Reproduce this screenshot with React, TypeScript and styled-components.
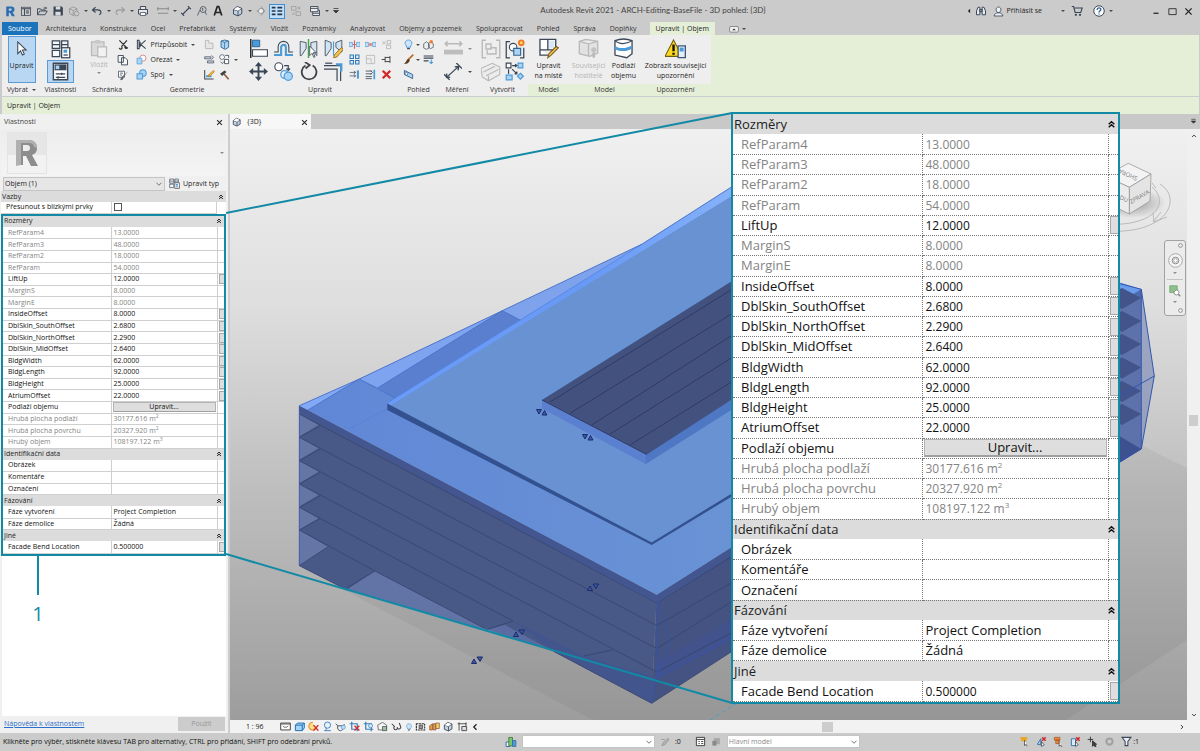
import React from "react";
import styled, { createGlobalStyle, css } from "styled-components";

const teal = "#128aa6";
const ink = "#3b4656";

const GlobalStyle = createGlobalStyle`
  * { box-sizing: border-box; }
  body { margin: 0; background: #cbcbcb; font-family: "Open Sans", "Noto Sans", sans-serif; font-size: 7px; line-height: 10px; color: #1e1e1e; }
  button, select, input { font: inherit; color: inherit; margin: 0; }
  button { border: 0; background: none; padding: 0; }
`;

/* ---------- icons ---------- */

const B = "#4d9bd6";
const L = "#a9d4f5";
const G = "#b9b9b9";

const icons: Record<string, React.ReactNode> = {
  revit: <><path d="M3 2h6.500c3 0 4.500 1.500 4.500 4 0 2-1 3.200-2.600 3.700L14.500 15H10.600L8 10.200H6.400V15H3z" fill="#2a6db0" /><path d="M6.400 4.800v2.700h2.300c1 0 1.600-.5 1.600-1.400S9.700 4.800 8.700 4.800z" fill="#cbcbcb" /></>,
  schedule: <><rect x="2" y="3" width="12" height="11" fill="none" stroke={ink} /><path d="M2 5h12M6 5v9M8 8h4M8 10.500h4" stroke={ink} strokeWidth="1.300" /></>,
  folder: <path d="M2 13V5h4l1 1.500h5V8M2 13l3-5h10l-3 5zM10 4h4M12.500 2.500L14 4l-1.500 1.500" fill="none" stroke={ink} strokeWidth="1.200" />,
  save: <><path d="M2 2h11l1.500 1.500V14H2z" fill={ink} /><path d="M5 2h6v4H5zM4.500 9h7v5h-7z" fill="#dcdcdc" /></>,
  sync: <><path d="M2 5l5-2.500L12 5v6l-5 3-5-3zM2 5l5 2.500L12 5M7 7.500V14" fill="none" stroke="#8f8f8f" /><circle cx="11.500" cy="11.500" r="3" fill="#cbcbcb" stroke="#8f8f8f" /></>,
  undo: <path d="M6 3L2 6.500 6 10M2 6.500h7c5 0 5.500 5 2 6.500" fill="none" stroke={ink} strokeWidth="1.600" />,
  redo: <path d="M10 3l4 3.500L10 10M14 6.500H7c-5 0-5.500 5-2 6.500" fill="none" stroke="#9c9c9c" strokeWidth="1.400" />,
  print: <><path d="M4.500 6V2h7v4M2 6h12v6H2z" fill="#e8e8e8" stroke={ink} strokeWidth="1.300" /><path d="M4.500 10h7v4h-7z" fill="#fff" stroke={ink} /></>,
  measure: <path d="M1 5h14M1 3v4M15 3v4M1 11h14" stroke="#8a8a8a" strokeWidth="1.600" fill="none" />,
  dimension: <path d="M3 13L13 3M1.500 10.500l4 4M10.500 1.500l4 4" stroke={ink} strokeWidth="1.500" />,
  tag: <><path d="M2 14L5 7" stroke={ink} /><circle cx="9.500" cy="6" r="4" fill="none" stroke={ink} /><path d="M9 8V4l-1 1M12 9l2 4" stroke={ink} fill="none" /></>,
  textA: <path d="M3 14L7 2h2l4 12M4.500 10h7" fill="none" stroke="#222" strokeWidth="2.200" />,
  home3d: <><path d="M2 6L7 2l6 2.500v7L8 14.500 2 12z" fill="#c6d3e3" stroke={ink} strokeWidth="1.300" /><path d="M2 6l6 2 5-3.500M8 8v6.500" fill="none" stroke={ink} strokeWidth="1.200" /><path d="M2.500 6L7 2.500l5 2L8 7.500z" fill="#fff" /></>,
  section: <><path d="M2 8h3" stroke="#888" /><circle cx="8" cy="8" r="3.500" fill="#eee" stroke="#888" /><path d="M8 2l5 6-5 6" fill="none" stroke="#888" /></>,
  thin: <path d="M1 3.500h5M1 8h5M1 12.500h5M8.500 3.500H15M8.500 8H15M8.500 12.500H15" stroke="#23374d" strokeWidth="2.200" />,
  closeHidden: <path d="M2 2h6v5H2zM8 9h6v5H8zM10 2l4 4M14 2l-4 4M3 10l3 3M6 10l-3 3" fill="none" stroke="#9a9a9a" />,
  switchWin: <path d="M2 2h10v7H2zM2 4.500h10M5 9v5h9V7h-2M5 11h9" fill="#eee" stroke={ink} strokeWidth="1.200" />,
  arrow: <path d="M4 1v12.500l3-3 2 4.500 2-1-2-4.300h4z" fill="#fff" stroke={ink} strokeWidth="1.100" />,
  typeProps: <><path d="M1 1.500h6v6H1zM8.500 1.500h5v6h-5zM1 9h6v5H1z" fill="#f6f9fc" stroke={ink} /><path d="M1 4.500h6M8.500 4.500h5" stroke={ink} /><rect x="8.500" y="7" width="6.500" height="8" fill="#fff" stroke={ink} /><rect x="10" y="8.500" width="3" height="2.500" fill={B} /><path d="M10 12.800h3.500" stroke={ink} /></>,
  props: <><path d="M2 1h12v14H2z" fill="#fff" stroke={ink} strokeWidth="1.200" /><path d="M3 2h10v5H3z" fill={ink} /><path d="M4 3h3v3H4z" fill={L} /><path d="M4 10h8M4 13h8M9 9v2M6 12v2" stroke={ink} /></>,
  paste: <><path d="M2 3h10v11H2z" fill="#dadada" stroke={G} /><path d="M5 1.500h4v3H5z" fill="#c8c8c8" /><path d="M7 7h7v8H7z" fill="#f2f2f2" stroke={G} /></>,
  cut: <path d="M2 2l11 11M13 2L5 11M2 13a2 2 0 1 0 3-2M14 12a2 2 0 1 1-3-2" fill="none" stroke="#333" strokeWidth="1.800" />,
  copy: <path d="M1.500 2h7v9h-7zM6 5h5l3 3v6.500H6z" fill="#f7f7f7" stroke={ink} strokeWidth="1.200" />,
  match: <><path d="M2 3h8v8H2z" fill="#fff" stroke={ink} /><path d="M4 5.500h4M4 8h3" stroke={ink} /><path d="M15 3l-6 7-1 4-4 1 1.500-3.500L8 9z" fill="#5a6470" /></>,
  cope: <path d="M2 2h2.500v12H2zM14 2L7 8l7 6M6 4v8" fill="none" stroke={ink} strokeWidth="1.500" />,
  cutGeo: <><circle cx="10" cy="6" r="4.500" fill="#fff" stroke="#c0605e" /><path d="M1.500 6h7v8.500h-7z" fill={L} stroke={B} /></>,
  join: <><circle cx="10" cy="6" r="4.800" fill={L} stroke={B} strokeWidth="1.500" /><path d="M1.500 7h8v7.500h-8z" fill={L} stroke={B} strokeWidth="1.500" /></>,
  notch: <path d="M2 2h5v4h6v8H2z" fill="#e6e6e6" stroke={G} strokeWidth="1.400" />,
  splitFace: <><path d="M3 3l5-1.500L14 3v9l-5 3-6-3z" fill={L} stroke="#34648f" strokeWidth="1.300" /><path d="M8 5l6-2M8 5v9M3 3l5 2" stroke="#34648f" fill="none" /></>,
  beam: <path d="M1 4h9v3H1zM5 10h9v3H5zM11 2l3 3-3 3" fill="#cfd8e2" stroke={ink} />,
  wallJoin: <><circle cx="4.500" cy="4.500" r="3.500" fill="#fff" stroke={ink} /><path d="M8 8h6v6H8zM9 2h5v4" fill="#fff" stroke={ink} strokeWidth="1.200" /><path d="M2 11l3 3 2-3" fill="none" stroke={ink} /></>,
  paint: <><path d="M1 1.500v13h13" fill="none" stroke={ink} strokeWidth="1.500" /><path d="M3 12h8v-3H3z" fill={B} /><path d="M14 2L7 8l-1 3 3-1 6-6z" fill="#f4b740" stroke="#b5791c" /></>,
  hammer: <><path d="M7 7l7 8" stroke="#8b5a3a" strokeWidth="2.400" /><path d="M1.500 7L8 2l3 2.500L4.500 10z" fill="#444" /></>,
  align: <><path d="M1.500 0v16" stroke="#222" strokeWidth="1.200" /><path d="M3 1h6v5.500H3z" fill={B} stroke="#28649b" strokeWidth=".8" /><path d="M3 9h12.500v5.500H3z" fill="#fff" stroke={ink} strokeWidth=".9" /></>,
  offset: <><path d="M0 11h3.500V6.500a4.500 4.500 0 0 1 9 0V11H16" fill="none" stroke={ink} strokeWidth=".9" /><path d="M0 13.500h6V7a2 2 0 0 1 4 0v6.500h6" fill="none" stroke={B} strokeWidth="1.800" /></>,
  mirrorAxis: <><path d="M1 2v12h1l4-6V3zM15 2v12l-5-6V3z" fill="#d7e4ef" stroke={ink} strokeWidth=".7" /><path d="M8 0v16" stroke="#3fa64a" strokeWidth="1.200" /><path d="M9 6v8l2-2 1.500 3.500 1-.5-1.500-3.500h2.500z" fill="#fff" stroke={ink} strokeWidth=".7" /></>,
  mirrorDraw: <><path d="M1 1v13h1l4-6V3zM15 1v10l-5-4V3z" fill="#cfe4f5" stroke={ink} strokeWidth=".7" /><path d="M8 2v12" stroke={B} /><path d="M15 7l-6 6-1 3 3-1 5-6z" fill="#f5c14a" stroke="#8a6420" strokeWidth=".7" /></>,
  move: <path d="M8 0l3 3.500H8.800v3.700h3.700V5L16 8l-3.500 3V8.800H8.800v3.700H11L8 16l-3-3.500h2.200V8.800H3.500V11L0 8l3.500-3v2.200h3.700V3.500H5z" fill={ink} />,
  copyMod: <><circle cx="4" cy="4" r="3.300" fill="#fff" stroke={ink} strokeWidth=".9" /><circle cx="9" cy="10.500" r="3.300" fill="#e4f1fb" stroke={B} /><circle cx="12" cy="12" r="3.500" fill={L} stroke={B} /><path d="M8.500 3H12v4M10.500 5.500L12 7l1.500-1.500" fill="none" stroke={ink} /></>,
  rotate: <path d="M11.500 3a6.200 6.200 0 1 1-6 0M5 0l4 2.600L5.500 5.500" fill="none" stroke="#3f4146" strokeWidth="1.500" />,
  trim: <><path d="M0 3h14v13M0 6h11v10" fill="none" stroke={ink} strokeWidth="1" /><path d="M10 2h4.500v6" stroke={B} strokeWidth="2" fill="none" /><path d="M1 1h6" stroke={ink} /></>,
  split: <><path d="M0 5h5v6H0zM11 5h5v6h-5z" fill="#bfe0f7" stroke={B} /><path d="M8 2v12M6 8h4" stroke="#d35a5a" strokeWidth="1.600" /></>,
  splitGap: <><path d="M0 5h5v6H0zM11 5h5v6h-5z" fill="#bfe0f7" stroke={B} /><circle cx="8" cy="8" r="2.500" fill="#e68989" /></>,
  unpin: <path d="M2 3l5 5M7 3L2 8M9 2h5v5H9zM8 9h6v5H8z" fill="none" stroke={G} strokeWidth="1.400" />,
  array: <path d="M1.500 1.500h5v5h-5zM9.500 1.500h5v5h-5zM1.500 9.500h5v5h-5zM9.500 9.500h5v5h-5z" fill="#d9ecfa" stroke="#3279b5" strokeWidth="1.500" />,
  scale: <path d="M2 2h12v12H2zM2 7h7v7" fill="#eee" stroke={G} strokeWidth="1.300" />,
  pin: <path d="M1 8h5M6 5h7M6 11h7M6 4v8M13 3v10" stroke="#444" strokeWidth="1.400" fill="none" />,
  trimOne: <><path d="M13 2v12" stroke={B} strokeWidth="3" /><path d="M1 5h8M1 10h8M7 3l3 2-3 2M7 8l3 2-3 2" fill="none" stroke={ink} /></>,
  trimMulti: <><path d="M13.500 1v14" stroke={B} strokeWidth="2.500" /><path d="M1 3h9M1 7h9M1 11h9M1 14h9M8 2l3 3-3 3" stroke={ink} strokeWidth="1.200" fill="none" /></>,
  del: <path d="M2.500 2.500l11 11M13.500 2.500l-11 11" stroke="#d42a2a" strokeWidth="3.400" />,
  bulb: <><path d="M5 10C1 6 4 1.500 8 1.500S15 6 11 10v2H5z" fill="#cfe6fa" stroke={B} strokeWidth="1.300" /><path d="M6 14h4" stroke={ink} strokeWidth="1.800" /></>,
  displace: <><path d="M1 7l4-3 4 3v6l-4 2-4-2zM8 7l3-3 4 3v5l-4 2-3-2z" fill="#eee" stroke={ink} /><circle cx="12" cy="4" r="2.600" fill="#ee7b30" /></>,
  brush: <><path d="M15 1L7 9" stroke="#b9722e" strokeWidth="2.500" /><path d="M8 7l2 2c-2 5-5 6-9 5 4-1 3-5 7-7z" fill="#5b3a22" /></>,
  lines: <><path d="M1 3h14M1 6h14M1 10h7" stroke={ink} strokeWidth="1.500" /><path d="M12 8v6M9.500 11.500L12 14l2.500-2.500" stroke={B} strokeWidth="1.500" fill="none" /></>,
  linework: <><path d="M2 2l12 6v6L2 8z" fill={L} stroke="#315f8c" strokeWidth="1.300" /><circle cx="5" cy="7" r="2" fill="#fff" stroke="#315f8c" /></>,
  rulerGray: <><path d="M1 4h14M3 2L1 4l2 2M13 2l2 2-2 2" fill="none" stroke={G} strokeWidth="1.200" /><path d="M0 9h16v4H0z" fill="#bdbdbd" /></>,
  dimBig: <path d="M2 13L13 3M0 10l5 5M11 0l5 5M13 3l-3.500.5M13 3l-.5 3.500M2 13l3.500-.5M2 13l.5-3.500" stroke={ink} strokeWidth="1.200" fill="none" />,
  groupGray: <path d="M4 1H1v14h3M12 1h3v14h-3M4 4h4v4H4zM8 7h4v5H5V9" fill="none" stroke={G} strokeWidth="1.100" />,
  group: <><path d="M4 2H1v13h3M12 15h3V7" fill="none" stroke={ink} strokeWidth="1" /><circle cx="6.500" cy="6.500" r="3" fill="#fff" stroke={ink} strokeWidth=".9" /><path d="M7 7.500h5.500V13H7z" fill={L} stroke="#34648f" strokeWidth=".9" /><circle cx="13" cy="3" r="2.700" fill="#f07c2e" /><circle cx="13" cy="3" r="1.100" fill="#ffe169" /></>,
  partsGray: <path d="M0 5l9-4 6 3v6l-9 5-5-3zM2 8l9-4.500M4 11l10-5M6 15V11" fill="#ececec" stroke={G} strokeWidth=".9" />,
  assembly: <><path d="M1 1h4v4H1z" fill="#fff" stroke={ink} /><path d="M11 1h4v4h-4zM1 11h5v4H1z" fill={L} stroke={B} /><path d="M13 9.500l2.500 2.500-2.500 2.500-2.500-2.500z" fill={L} stroke={B} /><path d="M6 3h4M3 6v4M6 6l4 4M8.500 1.800L10 3 8.500 4.200M10 8v2H8" stroke={ink} fill="none" /></>,
  editPlace: <><path d="M1.500 1h12v8h-12zM1.500 9v4H8M7.500 1v8" fill="#fff" stroke={ink} strokeWidth="1" /><path d="M8.500 2h4v6h-4z" fill="#d7e8f6" /><path d="M15.500 7.500L10 13l-2.500 2 .8-3 5.500-5.500z" fill="#f3c34b" stroke="#7c5b1c" strokeWidth=".8" /></>,
  host: <><path d="M1 2.500L6 1l9 1.500v9L9 14l-8-2zM1 2.500l7 2 7-2M8 4.500V14" fill="#e2e2e2" stroke={G} /><circle cx="12" cy="9" r="2" fill="#c3c3c3" /><path d="M12 11v4" stroke={G} strokeWidth="2" /></>,
  floors: <><path d="M1.500 2c4-1.500 9-1.500 13 0v10l-4 3-9-2z" fill="#fff" stroke={ink} strokeWidth="1" /><path d="M1.500 2c3 3 9 3 13 0" fill="none" stroke={ink} strokeWidth=".9" /><path d="M1.500 6c4 2.500 9 2 13-.5V8c-4 2.500-9 2.500-13 .5z" fill={B} /></>,
  warning: <><path d="M6.500 1.500L13 14H0z" fill="#ffd91f" stroke="#6e5d10" strokeWidth=".8" /><path d="M6.500 5v5M6.500 11.200v1.600" stroke="#111" strokeWidth="1.800" /><path d="M10 6h5.500v9H10z" fill="#e5eef8" stroke="#3c5675" /><path d="M11.200 7.300h3v3h-3z" fill={B} /></>,
  binoculars: <path d="M2 13V8l2-5h2.500v10zM9.500 13V3H12l2 5v5zM6.500 6h3v3h-3z" fill="#e7ecf2" stroke={ink} strokeWidth="1.300" />,
  user: <path d="M8 1.500c2.500 0 3.500 2 3.500 4s-1.500 4-3.500 4-3.500-2-3.500-4 1-4 3.500-4zM1.500 14.500c1-3.500 3-4 4.500-4.500h4c1.500.500 3.500 1 4.500 4.500z" fill="#eef1f5" stroke={ink} strokeWidth="1.200" />,
  cart: <><path d="M1 2h2.500l2 8h7.500l2-6H4.500" fill="none" stroke={ink} strokeWidth="1.500" /><circle cx="6.500" cy="13" r="1.500" fill={ink} /><circle cx="12" cy="13" r="1.500" fill={ink} /></>,
  help: <><circle cx="8" cy="8" r="7" fill="#fff" stroke={ink} strokeWidth="1.300" /><path d="M5.500 6.500C5.500 3 10.500 3 10.500 6c0 1.800-2.500 1.800-2.500 4M8 11.300v1.500" fill="none" stroke="#2b5d96" strokeWidth="1.800" /></>,
  detail: <><path d="M1 3h14v10H1z" fill="#fff" stroke="#333" strokeWidth="1.300" /><path d="M1 4.500h14M4 7l2 2h4l2-2" stroke="#333" fill="none" /></>,
  cubeBlue: <path d="M2 6l3-3h10v7l-3 4H2zM2 6h10v8M12 6l3-3" fill={L} stroke="#1d6fb5" strokeWidth="1.400" />,
  sunOff: <><path d="M7 2a5.500 5.500 0 1 0 4 9" fill="#ffe08a" stroke="#e2932a" strokeWidth="1.600" /><path d="M8 6l7 8M15 6l-7 8" stroke="#d42a2a" strokeWidth="2.200" /></>,
  shade: <><circle cx="8" cy="6" r="4.500" fill="#e8f2fb" stroke="#3980bf" strokeWidth="1.300" /><path d="M3 14h10M6 10v4" stroke="#3980bf" strokeWidth="1.300" /></>,
  teapot: <><path d="M1 4l3 3h7l3-2M4 7c-1 5 1 7 4 7s5-3 3-7" fill="none" stroke={ink} strokeWidth="1.300" /><circle cx="12" cy="9" r="3" fill="#bcdcf5" stroke={B} /></>,
  cropOff: <><path d="M4 1v11h11M1 4h11v11" fill="none" stroke="#3980bf" strokeWidth="1.800" /><path d="M8 7l7 7M15 7l-7 7" stroke="#d42a2a" strokeWidth="2" /></>,
  crop: <><path d="M4 1v11h11M1 4h11v11" fill="none" stroke="#3980bf" strokeWidth="1.800" /><circle cx="11" cy="7" r="3" fill="#cfe6fa" stroke="#3980bf" /></>,
  lock3d: <><path d="M1 6l7-4 6 4v7H2z" fill="#f5f5f5" stroke="#444" /><path d="M8 8h6v6H8z" fill="#9cc3a4" stroke="#444" /></>,
  glasses: <path d="M1 4l4 4a2.600 2.600 0 1 0 4 1 2.600 2.600 0 1 0 5-1l-2-5" fill="none" stroke="#444" strokeWidth="1.500" />,
  worksh: <><path d="M2 4h12v9H2z" fill="none" stroke="#333" strokeWidth="1.600" strokeDasharray="3 1" /><path d="M6 6h5v5H6z" fill="#999" stroke="#333" /></>,
  analytic: <><path d="M1 7l4-3v9H1zM6 4h4v9H6z" fill="#e4a13c" stroke="#874b3d" /><path d="M10 3h5v8h-5z" fill="#f4d35c" stroke="#7d4b4b" /></>,
  constraint: <path d="M3 2v12M1 4h13M13 2v6M7 8h7v6H7z" fill="#ddd" stroke="#444" strokeWidth="1.300" />,
  workset: <><path d="M1.500 8h5v6h-5z" fill="#fff" stroke="#2c6da4" strokeWidth="1.300" /><path d="M5 2h5v11H5z" fill="#7dc46f" stroke="#36702c" /><path d="M10 6h4.500v8H10z" fill={B} stroke="#2c6da4" /></>,
  editOnly: <path d="M13 2L5 9l-2 5 5-2 6-7zM2 4h6" fill="#b5b5b5" stroke="#8c8c8c" />,
  options: <><path d="M2 2h12v12H2z" fill="#fff" stroke="#333" strokeWidth="1.300" /><path d="M2 5h12M5 8h2M5 11h2M9 8h3M9 11h3" stroke="#333" strokeWidth="1.300" /></>,
  pick: <><path d="M4 3h9v9H4z" fill="#a8a8a8" /><path d="M2 7h6v7H2z" fill="#8a8a8a" /></>,
  selLink: <><path d="M2 3h10M3 6h8" stroke="#e8a628" strokeWidth="3" /><path d="M8 6v8l2-2 2 3" fill="#fff" stroke="#333" /></>,
  selUnder: <><path d="M2 12L7 4v9z" fill={L} stroke="#2c6da4" strokeWidth="1.300" /><path d="M9 2l5 5M14 2L9 7" stroke="#d42a2a" strokeWidth="2.200" /><path d="M8 8v7l4-2z" fill="#fff" stroke="#333" /></>,
  selPin: <><path d="M2 2h8v4H2zM4 6h5v5H4z" fill="#ef8a3c" stroke="#9f4e17" /><path d="M9 7v8l2-2 2 3" fill="#fff" stroke="#333" /></>,
  selFace: <><path d="M2 4h6v10H2z" fill="#d8ecfb" stroke="#2c6da4" strokeWidth="1.300" /><path d="M9 2l5 5M14 2L9 7" stroke="#d42a2a" strokeWidth="2.200" /><path d="M8 8v7l4-2z" fill="#fff" stroke="#333" /></>,
  dragSel: <path d="M5 1v8M1 5h8M8 7v8l2-2 2 3 1-1-1.500-3H14z" fill="#444" stroke="#333" strokeWidth="1.300" />,
  gear: <circle cx="8" cy="8" r="4.500" fill="none" stroke="#a0a0a0" strokeWidth="3" />,
  filter: <path d="M1.500 2h13L10 8v6H6V8z" fill="#eaf1f8" stroke={ink} strokeWidth="1.500" />,
  wheel: <><circle cx="8" cy="8" r="7.300" fill="#f4f4f4" stroke="#a5a5a5" /><circle cx="8" cy="8" r="3.600" fill="none" stroke="#888" /><circle cx="8" cy="8" r="2" fill="#fff" stroke="#aaa" /></>,
  zoomRegion: <><path d="M1 1h10v9H1z" fill="#8fc08a" stroke="#6ba066" /><circle cx="10" cy="10" r="3.300" fill="#fff" stroke="#777" /><path d="M12.500 12.500L15 15" stroke="#777" strokeWidth="1.600" /></>,
  dot: <circle cx="8" cy="8" r="6" fill="#f4f4f4" stroke="#8c8c8c" strokeWidth="3" />,
  close: <path d="M2.500 2.500l11 11M13.500 2.500l-11 11" stroke="#222" strokeWidth="2.300" />,
  minimize: <path d="M3 12.500h10" stroke="#222" strokeWidth="2.500" />,
  maximize: <path d="M1.500 3h13v10.500h-13z" fill="none" stroke="#222" strokeWidth="1.500" />,
  collapse: <path d="M3 7.500L8 3l5 4.500M3 13l5-4.500L13 13" fill="none" stroke="#111" strokeWidth="2.500" />,
  down: <path d="M3 5.500l5 5 5-5" fill="none" stroke="#666" strokeWidth="1.800" />,
  downBold: <path d="M3 5.500l5 5 5-5" fill="none" stroke="#333" strokeWidth="2.500" />,
  up: <path d="M3 10.500l5-5 5 5" fill="none" stroke="#333" strokeWidth="2.500" />,
  right: <path d="M5 2.500l5.500 5.500L5 13.500" fill="none" stroke="#333" strokeWidth="2.500" />,
  left: <path d="M11 2.500L5.500 8l5.500 5.500" fill="none" stroke="#222" strokeWidth="2.500" />,
  leftTri: <path d="M11 2L5 8l6 6z" fill="#222" />,
  menuTri: <path d="M3 3h10M3 7h10l-5 5z" fill="#333" stroke="#333" strokeWidth="1.500" />,
};

const Svg = styled.svg<{ $s: number }>`
  display: block;
  flex: none;
  width: ${(p) => p.$s}px;
  height: ${(p) => p.$s}px;
`;
const Icon = ({ name, size = 12 }: { name: string; size?: number }) => (
  <Svg $s={size} viewBox="0 0 16 16" aria-hidden="true">{icons[name]}</Svg>
);

const Caret = styled.span<{ $soft?: boolean }>`
  flex: none;
  width: 0;
  height: 0;
  border: 2px solid transparent;
  border-top-color: ${(p) => (p.$soft ? "#8c8c8c" : "#4a4a4a")};
  border-bottom: 0;
`;

/* ---------- shell ---------- */

const Shell = styled.div`
  position: relative;
  display: flex;
  flex-direction: column;
  min-height: 100vh;
`;

const TitleBar = styled.header`
  display: flex;
  align-items: center;
  height: 22px;
  padding: 0 8px 0 2px;
`;
const Side = styled.div<{ $end?: boolean }>`
  flex: 1 1 0;
  display: flex;
  align-items: center;
  justify-content: ${(p) => (p.$end ? "flex-end" : "flex-start")};
`;
const AppTitle = styled.h1`
  margin: 0 0 2px;
  padding-left: 112px;
  font-family: Lato, "Open Sans", sans-serif;
  font-size: 8px;
  font-weight: 400;
  color: #444;
  white-space: nowrap;
`;
const Quick = styled.button<{ $w?: number; $on?: boolean }>`
  display: flex;
  align-items: center;
  justify-content: center;
  flex: none;
  width: ${(p) => p.$w ?? 16}px;
  height: 15px;
  ${(p) => p.$on && css`background: #c4e0f8; outline: 1px solid #3f8fd2; outline-offset: -1px;`}
`;
const Spacer = styled.span<{ $w: number }>`
  flex: none;
  width: ${(p) => p.$w}px;
`;
const SignIn = styled.button`
  display: flex;
  align-items: center;
  gap: 3px;
  margin: 0 19px 0 4px;
`;
const WindowButtons = styled.div`
  display: flex;
  gap: 8px;
  margin-left: 38px;
`;

const Tabs = styled.nav`
  display: flex;
  gap: 2px;
  height: 13px;
  padding-left: 2px;
`;
const Tab = styled.button<{ $kind?: "file" | "active" }>`
  padding: 0 6px;
  color: #333;
  white-space: nowrap;
  ${(p) => p.$kind === "file" && css`background: #1b74bb; color: #fff;`}
  ${(p) => p.$kind === "active" && css`background: #e5efd8; color: #222; margin-left: 5px;`}
`;
const TabToggle = styled.button`
  display: flex;
  align-items: center;
  gap: 3px;
  margin-left: 12px;
`;

const Ribbon = styled.section`
  display: flex;
  height: 62px;
  margin: 0 1px 0 2px;
  background: #e5efd8;
  border-bottom: 1px solid #c9cfd0;
`;
const Group = styled.div<{ $w: number; $ctx?: boolean }>`
  flex: none;
  width: ${(p) => p.$w}px;
  background: ${(p) => (p.$ctx ? "#e5efd8" : "#eeeeee")};
`;
const GroupBody = styled.div`
  display: flex;
  justify-content: center;
  height: 49px;
  padding-top: 1px;
  background: #eeeeee;
`;
const GroupLabel = styled.div`
  display: flex;
  align-items: center;
  justify-content: center;
  gap: 4px;
  height: 12px;
  color: #333;
  white-space: nowrap;
`;
const BigButton = styled.button<{ $w?: number; $on?: boolean; $off?: boolean }>`
  display: flex;
  flex-direction: column;
  align-items: center;
  gap: 2px;
  flex: none;
  width: ${(p) => p.$w ?? 28}px;
  height: 47px;
  padding-top: 2px;
  line-height: 10px;
  white-space: pre-line;
  ${(p) => p.$off && css`color: #b4b4b4;`}
  ${(p) => p.$on && css`background: #b9d7f2; outline: 1px solid #5a9bd5; outline-offset: -1px; padding-top: 5px; gap: 5px;`}
`;
const Stack = styled.div`
  display: flex;
  flex-direction: column;
  align-items: flex-start;
  padding-top: 1px;
`;
const Cells = styled.div<{ $cols: string; $row: number }>`
  display: grid;
  grid-template-columns: ${(p) => p.$cols};
  grid-auto-rows: ${(p) => p.$row}px;
  align-content: start;
  align-items: center;
  justify-items: center;
  padding-top: 1px;
`;
const CellButton = styled.button<{ $on?: boolean }>`
  display: flex;
  align-items: center;
  justify-content: center;
  ${(p) => p.$on && css`padding: 1px 3px; background: #b9d7f2; outline: 1px solid #5a9bd5;`}
`;
const ToolRow = styled.button`
  display: flex;
  align-items: center;
  gap: 4px;
  width: 67px;
  height: 15px;
  white-space: nowrap;
`;

const OptionsBar = styled.div`
  height: 17px;
  margin: 0 1px 0 2px;
  padding: 4px 5px 0;
  background: #e5efd8;
`;

const Main = styled.main`
  flex: 1;
  display: flex;
  min-height: 0;
`;

/* ---------- properties palette ---------- */

const Palette = styled.aside`
  display: flex;
  flex-direction: column;
  flex: none;
  width: 229px;
  padding: 0 2px 0 1px;
  background: #f0f0f0;
  border-right: 1px solid #cfcfcf;
`;
const PaletteTitle = styled.div`
  display: flex;
  align-items: center;
  justify-content: space-between;
  height: 16px;
  padding: 0 3px;
  color: #444;
`;
const TypePreview = styled.div`
  display: flex;
  align-items: center;
  justify-content: space-between;
  height: 46px;
  padding: 0 2px 0 6px;
  background: linear-gradient(#ededed, #f4f4f4);
`;
const Thumb = styled.div`
  display: grid;
  place-items: center;
  width: 40px;
  height: 42px;
  border: 1px solid #e4e4e4;
  background: linear-gradient(#e6e6e6 55%, #f2f2f2 55%);
`;
const SelectorRow = styled.div`
  display: flex;
  align-items: center;
  gap: 4px;
  height: 15px;
  padding-left: 2px;
`;
const SelectWrap = styled.span<{ $w: number; $h: number; $white?: boolean }>`
  position: relative;
  flex: none;
  width: ${(p) => p.$w}px;
  height: ${(p) => p.$h}px;
  select {
    appearance: none;
    display: block;
    width: 100%;
    height: 100%;
    padding: 0 14px 0 1px;
    border: 1px solid #c4c4c4;
    border-radius: 0;
    background: ${(p) => (p.$white ? "#fff" : "#e6e6e6")};
    color: ${(p) => (p.$white ? "#8a8a8a" : "#222")};
  }
  svg { position: absolute; right: 2px; top: 3px; pointer-events: none; }
`;
const EditType = styled.button`
  display: flex;
  align-items: center;
  gap: 3px;
  white-space: nowrap;
`;
const Check = styled.input`
  appearance: none;
  display: block;
  width: 8px;
  height: 8px;
  border: 1px solid #555;
  background: #fff;
`;

const Highlight = styled.div`
  border: 2px solid ${teal};
  background: #fff;
`;
const Callout = styled.div`
  position: absolute;
  top: 112px;
  right: 80px;
  width: 389px;
  border: 2px solid ${teal};
  background: #fff;
`;
const CalloutLines = styled.svg`
  position: absolute;
  top: 112px;
  left: 226px;
  width: calc(100% - 693px);
  height: 592px;
  pointer-events: none;
`;

type Look = { $big?: boolean };
const Table = styled.table<Look & { $h?: number }>`
  width: 100%;
  height: ${(p) => (p.$h ? `${p.$h}px` : "auto")};
  table-layout: fixed;
  border-collapse: collapse;
  background: #fff;
  font-size: ${(p) => (p.$big ? 13 : 7)}px;
  line-height: ${(p) => (p.$big ? 17 : 10)}px;
  tr { height: ${(p) => (p.$big ? 20 : 11)}px; }
  th, td { padding: 0; text-align: left; font-weight: 400; white-space: nowrap; }
  sup { font-size: ${(p) => (p.$big ? 8 : 5)}px; line-height: 0; }
`;
const Col = styled.col<{ $w?: number }>`
  width: ${(p) => (p.$w ? `${p.$w}px` : "auto")};
`;
const Head = styled.th<Look>`
  background: #dcdcdc;
  > div {
    display: flex;
    align-items: center;
    justify-content: space-between;
    padding: ${(p) => (p.$big ? "0 2px 0 1px" : "0 2px 0 1px")};
  }
`;
const line = (big?: boolean) => (big ? "1px dotted #777" : "1px solid #cfcfcf");
const Name = styled.th<Look & { $dim?: boolean }>`
  && { padding-left: ${(p) => (p.$big ? 8 : 5)}px; }
  border-right: ${(p) => line(p.$big)};
  border-bottom: ${(p) => line(p.$big)};
  color: ${(p) => (p.$dim ? "#848484" : "#111")};
`;
const Value = styled.td<Look & { $dim?: boolean; $flush?: boolean; $num?: boolean }>`
  && { padding: 0; padding-left: ${(p) => (p.$flush ? 1 : p.$big ? 3 : 2)}px; padding-right: 1px; }
  border-right: ${(p) => line(p.$big)};
  border-bottom: ${(p) => line(p.$big)};
  color: ${(p) => (p.$dim ? "#848484" : "#111")};
  ${(p) => p.$num && p.$big && css`font-size: 12px;`}
`;
const Assoc = styled.td<Look>`
  border-bottom: ${(p) => line(p.$big)};
  button {
    display: block;
    width: 100%;
    height: ${(p) => (p.$big ? 18 : 10)}px;
    background: #dedede;
    border: 1px solid #a8a8a8;
    border-right: 0;
  }
  && { padding-left: 1px; }
`;
const EditButton = styled.button<Look>`
  display: block;
  width: 100%;
  height: ${(p) => (p.$big ? 18 : 10)}px;
  background: #dedede;
  border: 1px solid #b4b4b4;
  border-bottom: ${(p) => (p.$big ? 2 : 1)}px solid #a0a0a0;
  line-height: ${(p) => (p.$big ? 15 : 8)}px;
  text-align: center;
`;

type Prop = { name: string; value?: React.ReactNode; text?: boolean; dim?: boolean; assoc?: boolean; edit?: boolean };
const sections: { title: string; rows: Prop[] }[] = [
  {
    title: "Rozměry",
    rows: [
      { name: "RefParam4", value: "13.0000", dim: true },
      { name: "RefParam3", value: "48.0000", dim: true },
      { name: "RefParam2", value: "18.0000", dim: true },
      { name: "RefParam", value: "54.0000", dim: true },
      { name: "LiftUp", value: "12.0000", assoc: true },
      { name: "MarginS", value: "8.0000", dim: true },
      { name: "MarginE", value: "8.0000", dim: true },
      { name: "InsideOffset", value: "8.0000", assoc: true },
      { name: "DblSkin_SouthOffset", value: "2.6800", assoc: true },
      { name: "DblSkin_NorthOffset", value: "2.2900", assoc: true },
      { name: "DblSkin_MidOffset", value: "2.6400", assoc: true },
      { name: "BldgWidth", value: "62.0000", assoc: true },
      { name: "BldgLength", value: "92.0000", assoc: true },
      { name: "BldgHeight", value: "25.0000", assoc: true },
      { name: "AtriumOffset", value: "22.0000", assoc: true },
      { name: "Podlaží objemu", text: true, edit: true },
      { name: "Hrubá plocha podlaží", value: <>30177.616 m<sup>2</sup></>, dim: true },
      { name: "Hrubá plocha povrchu", value: <>20327.920 m<sup>2</sup></>, dim: true },
      { name: "Hrubý objem", value: <>108197.122 m<sup>3</sup></>, dim: true },
    ],
  },
  { title: "Identifikační data", rows: [{ name: "Obrázek" }, { name: "Komentáře" }, { name: "Označení" }] },
  {
    title: "Fázování",
    rows: [
      { name: "Fáze vytvoření", value: "Project Completion", text: true },
      { name: "Fáze demolice", value: "Žádná", text: true },
    ],
  },
  { title: "Jiné", rows: [{ name: "Facade Bend Location", value: "0.500000", assoc: true }] },
];

const SectionHead = ({ title, big }: { title: string; big?: boolean }) => (
  <tr>
    <Head colSpan={3} $big={big} scope="colgroup">
      <div>
        {title}
        <button aria-label={`Sbalit ${title}`}><Icon name="collapse" size={big ? 9 : 6} /></button>
      </div>
    </Head>
  </tr>
);

const Properties = ({ big }: { big?: boolean }) => (
  <Table $big={big} $h={big ? 588 : 338}>
    <colgroup>
      <Col $w={big ? 189 : 108} />
      <Col />
      <Col $w={big ? 10 : 7} />
    </colgroup>
    {sections.map((s) => (
      <tbody key={s.title}>
        <SectionHead title={s.title} big={big} />
        {s.rows.map((r) => (
          <tr key={r.name}>
            <Name scope="row" $big={big} $dim={r.dim}>{r.name}</Name>
            <Value $big={big} $dim={r.dim} $flush={r.edit} $num={!r.text}>
              {r.edit ? <EditButton $big={big}>Upravit...</EditButton> : r.value}
            </Value>
            <Assoc $big={big}>{r.assoc && <button aria-label={`Přidružit ${r.name}`} />}</Assoc>
          </tr>
        ))}
      </tbody>
    ))}
  </Table>
);

const PaletteRest = styled.div`
  flex: 1;
  min-height: 90px;
  margin-left: 1px;
  padding-left: 31px;
  background: #fff;
`;
const Leader = styled.div`
  display: flex;
  flex-direction: column;
  align-items: center;
  width: 10px;
  color: ${teal};
  font-size: 20px;
  line-height: 38px;
  &::before { content: ""; width: 2px; height: 39px; background: ${teal}; }
`;
const PaletteFoot = styled.div`
  display: flex;
  align-items: center;
  justify-content: space-between;
  height: 17px;
  padding: 0 1px 2px 3px;
  a { color: #2a6fc9; }
  button { width: 47px; height: 14px; background: #cccccc; color: #9a9a9a; }
`;

/* ---------- view ---------- */

const View = styled.section`
  flex: 1;
  display: flex;
  flex-direction: column;
  min-width: 0;
  padding-left: 1px;
`;
const ViewTabs = styled.div`
  display: flex;
  align-items: stretch;
  justify-content: space-between;
  height: 15px;
  padding-right: 2px;
  background: #c8c8c8;
`;
const ViewTab = styled.button`
  display: flex;
  align-items: center;
  gap: 5px;
  width: 81px;
  padding: 1px 3px 0 2px;
  background: #f7f7f7;
  svg:last-child { margin-left: auto; }
`;
const ViewBody = styled.div`
  flex: 1;
  display: flex;
`;
const Canvas = styled.div`
  position: relative;
  flex: 1;
  min-height: 400px;
  overflow: hidden;
`;
const Scene = styled.svg`
  position: absolute;
  inset: 0;
  width: 100%;
  height: 100%;
`;
const VScroll = styled.div`
  display: flex;
  flex-direction: column;
  align-items: center;
  justify-content: space-between;
  width: 13px;
  padding: 4px 0 2px;
  background: #f0f0f0;
  i { width: 9px; height: 11px; margin-bottom: 10px; background: #cdcdcd; }
`;
const NavBar = styled.div`
  position: absolute;
  top: 111px;
  right: 1px;
  display: flex;
  flex-direction: column;
  align-items: center;
  justify-content: space-between;
  width: 22px;
  height: 76px;
  padding: 2px 0;
  border: 1px solid #a2a2a2;
  border-radius: 3px;
  background: #ebebeb;
  hr { width: 16px; margin: 0; border: 0; border-top: 1px solid #c2c2c2; }
  > svg { align-self: flex-end; margin-right: 2px; }
`;

const ViewBar = styled.div`
  display: flex;
  align-items: center;
  height: 13px;
  padding: 0 2px 0 16px;
  background: #f2f2f2;
`;
const Scale = styled.button`
  width: 34px;
  text-align: left;
`;
const ViewTools = styled.div`
  display: flex;
  align-items: center;
  justify-content: space-between;
  width: 199px;
`;
const HScroll = styled.div`
  flex: 1;
  display: flex;
  align-items: center;
  justify-content: space-between;
  padding: 0 13px 0 0;
  i { width: 11px; height: 10px; margin-left: 343px; background: #cdcdcd; }
`;

const StatusBar = styled.footer`
  display: flex;
  align-items: center;
  height: 18px;
  padding: 0 61px 1px 3px;
  background: #cbcbcb;
  color: #111;
`;
const Hint = styled.span`
  flex: none;
  width: 502px;
`;
const StatusGroup = styled.div<{ $gap: number; $push?: boolean }>`
  display: flex;
  align-items: center;
  gap: ${(p) => p.$gap}px;
  ${(p) => p.$push && css`margin-left: auto;`}
`;

const Grip = ({ x, y, flip }: { x: number; y: number; flip?: boolean }) => (
  <g transform={`translate(${x} ${y})`} fill="#3d57a8" stroke="#1b2c6b">
    {flip ? <path d="M-5.500 3.500l2.500-4.500 2.500 4.500zM0 -3h5.500L3 1.500z" /> : <path d="M-5.500 -2.500h5l-2.500 4.500zM0 3h5L2.500 -1.500z" />}
  </g>
);

const levels = [414, 437.3, 460.7, 484, 507.3];
const eastLevels = [298, 321, 344, 367.500, 391, 414];
const Building = () => (
  <Scene viewBox="230 129 957 591" preserveAspectRatio="xMidYMid slice" role="img" aria-label="3D pohled na objem budovy">
    <defs>
      <linearGradient id="sky" x1="0" y1="0" x2="0" y2="1">
        <stop offset="0" stopColor="#f0f0f0" />
        <stop offset=".3" stopColor="#dedede" />
        <stop offset=".6" stopColor="#bfbfbf" />
        <stop offset="1" stopColor="#9d9d9d" />
      </linearGradient>
      <linearGradient id="roof" x1="0" y1="0" x2="1" y2="0">
        <stop offset="0" stopColor="#6087d6" />
        <stop offset="1" stopColor="#6993d5" />
      </linearGradient>
      <linearGradient id="rim" x1="0" y1="0" x2="1" y2="0">
        <stop offset="0" stopColor="#6a9bf8" />
        <stop offset=".6" stopColor="#689af5" />
        <stop offset="1" stopColor="#86b1fa" />
      </linearGradient>
      <radialGradient id="cubeShade">
        <stop offset="0" stopColor="#9c9c9c" />
        <stop offset="1" stopColor="#9c9c9c" stopOpacity="0" />
      </radialGradient>
    </defs>
    <path d="M230 129h957v591H230z" fill="url(#sky)" />
    <path d="M340 588L593 720H1066L1187 640V468L1141 445z" fill="#000" opacity=".045" />

    <path d="M299.300 405.700L656.700 595 651.700 703.300 553 651 487 629 345 589 299.300 565.700z" fill="#485988" />
    <path d="M656.700 595L731 547.700V652L651.700 703.300z" fill="#445382" />
    {levels.map((y) => (
      <path key={y} d={`M299.300 ${y}L318.500 ${y + 11}L299.300 ${y + 22.500}z`} fill="#6575a6" />
    ))}
    <path d="M299.300 530L327.700 546.700 299.300 565.700z" fill="#6575a6" />
    <path d="M348 589L375 571 487 629.500 470 626z" fill="#6273a5" />
    <path d="M487 629.500L505 625 553 651z" fill="#5b6ca3" />
    <path d="M513 621L584 656 657 678 651.700 703.300 553 651z" fill="#42548f" opacity=".8" />
    <path d="M657 663L731 620V640L657 678z" fill="#3f5292" opacity=".6" />
    <g stroke="#35436f" strokeWidth=".8" fill="none">
      <path d="M299.300 414L656.700 603 731 557M299.300 437.300L656.700 625.500 731 583M299.300 460.700L656.700 648.500 731 602M299.300 484L656.700 672 731 633M299.300 507.300L513 621M299.300 530L375 571" />
      <path d="M299.300 437.300L320 426M299.300 460.700L320 449.300M299.300 484L320 472.500M299.300 507.300L320 496M299.300 530L320 518.700M299.300 565.700L327.700 547" />
      <path d="M299.300 565.700L345 589 375 571L487 629.500L513 621M553 651L651.700 703.300 731 652M584 656L612 650" />
    </g>
    <path d="M299.300 405.700V565.700M656.700 595V672L651.700 703M656.700 595L670 642 657 678 731 638" stroke="#3654b4" strokeWidth="1" fill="none" opacity=".7" />

    <path d="M299.300 405.700L359.300 379 502.300 310.700 641.700 244.300 731 187.300V547.700L656.700 595z" fill="url(#roof)" />
    <path d="M299.300 405.700L656.700 595 731 547.700V556L656.700 603 299.300 412z" fill="#43568f" />
    <path d="M299.300 405.700L359.300 379 308 410z" fill="#82a9f6" />
    <path d="M359.300 379L502.300 310.700 378 387.700z" fill="#7ea3ef" />
    <path d="M378 387.700L502.300 310.700 520 320 395 398z" fill="#5a7fcf" />
    <path d="M502.300 310.700L641.700 244.300 520 320z" fill="#7ea3ec" />
    <path d="M387.300 403L641.700 244.300 731 187.300V196.700L390 406z" fill="url(#rim)" />
    <path d="M390 406L731 196.700V495.700L651.700 544.300z" fill="#6992d2" />
    <path d="M387.300 403.500L651.700 542.500 731 494V497L651.700 545 387.300 410z" fill="#33508f" />
    <path d="M387.300 403L641.700 244.300M350 428.500L387 409" stroke="#4f7ee0" strokeWidth=".6" fill="none" />
    <path d="M299.300 405.700L359.300 379 502.300 310.700 641.700 244.300 731 187.300M308 410L359.300 379 395 398M378 387.700L502.300 310.700 520 320" stroke="#4a72c8" strokeWidth=".9" fill="none" />

    <path d="M542 400L731 281.700V410L645.700 464 542 408.500z" fill="#5a80cf" />
    <path d="M646 453L731 400V410L645.700 464z" fill="#4e77c4" />
    <path d="M542 400L731 281.700V400L646.700 454.500z" fill="#42517e" />
    <path d="M550 402L731 290M570 413.300L731 314.300M591.700 425L731 336M610 434L731 358.300M630 445L731 382.300M542 400L646.700 454.500" stroke="#2c3862" strokeWidth=".9" fill="none" />

    <path d="M1110 281L1121 283 1141.300 289.300V449L1121 461.700 1110 468z" fill="#5d72ab" />
    <path d="M1110 281L1121 283 1141.300 289.300 1110 312z" fill="#6c9cec" />
    <path d="M1121 300L1141.300 289.300 1141.300 298 1121 289z" fill="#4668ad" opacity=".6" />
    {eastLevels.map((y) => (
      <path key={y} d={`M1141.300 ${y}L1122 ${y - 10}L1110 ${y - 4}V${y + 4}L1122 ${y + 11}z`} fill="#43548a" />
    ))}
    <path d="M1110 430L1121 437 1141.300 449 1121 461.700 1110 468z" fill="#3d5190" />
    <path d="M1141.300 289.300L1154.300 376 1141.300 449z" fill="#8290b8" opacity=".7" />
    <path d="M1110 281L1141.300 289.300 1154.300 376 1141.300 449 1110 468M1141.300 289.300V449M1110 401L1154.300 376" stroke="#3156b0" fill="none" />

    <ellipse cx="1132" cy="203" rx="34" ry="15" fill="url(#cubeShade)" />
    <path d="M1160 184c16 10 13 30-8 40-12 6-28 8-42 7M1152 187c12 10 9 24-6 31-10 5-24 7-36 6M1152 183l4 5M1153 213l1 9 13-5M1153 222l8-10" fill="none" stroke="#b4b4b4" strokeWidth=".9" />
    <path d="M1128.300 163.300L1151 174 1129.300 187.300 1105 176z" fill="#f3f3f3" stroke="#8f8f8f" strokeWidth=".7" />
    <path d="M1151 174L1150 201 1129.300 214V187.300z" fill="#e4e4e4" stroke="#8f8f8f" strokeWidth=".7" />
    <path d="M1129.300 187.300V214L1105 202V176z" fill="#ececec" stroke="#8f8f8f" strokeWidth=".7" />
    <g fill="#7d7d7d" fontSize="6" fontFamily="Open Sans, sans-serif">
      <text transform="translate(1131 204) rotate(-30)">ZPRAVA</text>
      <text transform="translate(1119 199) rotate(24)">DU</text>
      <text transform="translate(1138 177) rotate(205)">SHORA</text>
    </g>
    <path d="M737 703L710 720" stroke="#4a9fc0" strokeDasharray="4 3" />

    <Grip x={542} y={412} />
    <Grip x={588} y={437} />
    <Grip x={593} y={587} flip />
    <Grip x={519} y={633} flip />
    <Grip x={477} y={660} flip />
  </Scene>
);

const Q = ({ name, w, on, label, size = 12 }: { name: string; w?: number; on?: boolean; label: string; size?: number }) => (
  <Quick $w={w} $on={on} aria-label={label}><Icon name={name} size={size} /></Quick>
);
const QMenu = ({ label }: { label: string }) => <Quick $w={7} aria-label={label}><Caret /></Quick>;
const Cell = ({ name, size = 12, on }: { name: string; size?: number; on?: boolean }) => (
  <CellButton $on={on} aria-label={name}><Icon name={name} size={size} /></CellButton>
);

const tabNames = ["Architektura", "Konstrukce", "Ocel", "Prefabrikát", "Systémy", "Vložit", "Poznámky", "Analyzovat", "Objemy a pozemek", "Spolupracovat", "Pohled", "Správa", "Doplňky"];
const viewIcons = ["detail", "cubeBlue", "sunOff", "shade", "teapot", "cropOff", "crop", "lock3d", "glasses", "bulb", "worksh", "analytic", "home3d", "constraint", "left"];
const modifyBig = ["align", "offset", "mirrorAxis", "mirrorDraw", "move", "copyMod", "rotate", "trim"];
const modifySmall = ["split", "splitGap", "unpin", "array", "scale", "pin", "trimOne", "trimMulti", "del"];

export default function App() {
  return (
    <Shell>
      <GlobalStyle />
      <TitleBar>
        <Side>
          <Q name="revit" label="Revit" />
          <Q name="schedule" label="Domů" />
          <Q name="folder" label="Otevřít" />
          <Q name="save" label="Uložit" />
          <Q name="sync" label="Synchronizovat" />
          <QMenu label="Možnosti synchronizace" />
          <Q name="undo" label="Zpět" />
          <QMenu label="Historie zpět" />
          <Q name="redo" label="Znovu" />
          <QMenu label="Historie znovu" />
          <Q name="print" label="Tisk" />
          <Spacer $w={4} />
          <Q name="measure" label="Měřit" />
          <QMenu label="Možnosti měření" />
          <Q name="dimension" label="Kóta" />
          <Q name="tag" label="Popisek" />
          <Q name="textA" label="Text" />
          <Spacer $w={4} />
          <Q name="home3d" label="3D pohled" />
          <QMenu label="Možnosti 3D pohledu" />
          <Q name="section" label="Řez" />
          <Q name="thin" on label="Tenké čáry" />
          <Spacer $w={3} />
          <Q name="closeHidden" label="Zavřít neaktivní" />
          <Spacer $w={3} />
          <Q name="switchWin" label="Přepnout okna" />
          <QMenu label="Okna" />
          <Q name="menuTri" w={12} label="Přizpůsobit panel" size={8} />
        </Side>
        <AppTitle>Autodesk Revit 2021 - ARCH-Editing-BaseFile - 3D pohled: {"{3D}"}</AppTitle>
        <Side $end>
          <Q name="leftTri" w={8} size={6} label="Sbalit hledání" />
          <Q name="binoculars" label="Hledat" />
          <SignIn><Icon name="user" size={11} />Přihlásit se</SignIn>
          <Caret />
          <Spacer $w={4} />
          <Q name="cart" label="Obchod" />
          <Spacer $w={6} />
          <Q name="help" label="Nápověda" />
          <QMenu label="Možnosti nápovědy" />
          <WindowButtons>
            <Q name="minimize" w={8} size={8} label="Minimalizovat" />
            <Q name="maximize" w={8} size={9} label="Maximalizovat" />
            <Q name="close" w={8} size={9} label="Zavřít" />
          </WindowButtons>
        </Side>
      </TitleBar>

      <Tabs>
        <Tab $kind="file">Soubor</Tab>
        {tabNames.map((t) => <Tab key={t}>{t}</Tab>)}
        <Tab $kind="active">Upravit | Objem</Tab>
        <TabToggle aria-label="Zobrazení pásu karet">
          <Svg $s={10} viewBox="0 0 16 16"><rect x="1" y="4" width="14" height="9" rx="2" fill="#f2f2f2" stroke="#555" /><path d="M5 10l3-3 3 3z" fill="#333" /></Svg>
          <Caret />
        </TabToggle>
      </Tabs>

      <Ribbon>
        <Group $w={39}>
          <GroupBody><BigButton $on><Icon name="arrow" size={15} />Upravit</BigButton></GroupBody>
          <GroupLabel>Vybrat <Caret /></GroupLabel>
        </Group>
        <Group $w={39}>
          <GroupBody>
            <Cells $cols="26px" $row={23}><Cell name="typeProps" size={20} /><Cell name="props" size={19} on /></Cells>
          </GroupBody>
          <GroupLabel>Vlastnosti</GroupLabel>
        </Group>
        <Group $w={54}>
          <GroupBody>
            <BigButton $off $w={32}><Icon name="paste" size={20} />Vložit<Caret $soft /></BigButton>
            <Cells $cols="16px" $row={15}><Cell name="cut" size={11} /><Cell name="copy" /><Cell name="match" /></Cells>
          </GroupBody>
          <GroupLabel>Schránka</GroupLabel>
        </Group>
        <Group $w={106}>
          <GroupBody>
            <Stack>
              <ToolRow><Icon name="cope" size={11} />Přizpůsobit <Caret /></ToolRow>
              <ToolRow><Icon name="cutGeo" size={11} />Ořezat <Caret /></ToolRow>
              <ToolRow><Icon name="join" size={11} />Spoj <Caret /></ToolRow>
            </Stack>
            <Cells $cols="14px 16px 6px" $row={15}>
              <Cell name="notch" size={11} /><Cell name="splitFace" size={11} /><span />
              <Cell name="beam" size={11} /><Cell name="wallJoin" size={11} /><Caret />
              <Cell name="paint" size={11} /><Cell name="hammer" size={11} />
            </Cells>
          </GroupBody>
          <GroupLabel>Geometrie</GroupLabel>
        </Group>
        <Group $w={160}>
          <GroupBody>
            <Cells $cols="repeat(4, 25px)" $row={23}>{modifyBig.map((n) => <Cell key={n} name={n} size={19} />)}</Cells>
            <Cells $cols="repeat(3, 16px)" $row={15}>{modifySmall.map((n) => <Cell key={n} name={n} size={11} />)}</Cells>
          </GroupBody>
          <GroupLabel>Upravit</GroupLabel>
        </Group>
        <Group $w={37}>
          <GroupBody>
            <Cells $cols="14px 6px 15px" $row={15}>
              <Cell name="bulb" size={11} /><Caret /><Cell name="displace" size={11} />
              <Cell name="brush" size={11} /><Caret /><Cell name="lines" size={11} />
              <Cell name="linework" size={11} />
            </Cells>
          </GroupBody>
          <GroupLabel>Pohled</GroupLabel>
        </Group>
        <Group $w={40}>
          <GroupBody>
            <Cells $cols="26px 8px" $row={23}><Cell name="rulerGray" size={19} /><Caret $soft /><Cell name="dimBig" size={18} /><Caret /></Cells>
          </GroupBody>
          <GroupLabel>Měření</GroupLabel>
        </Group>
        <Group $w={51}>
          <GroupBody>
            <Cells $cols="repeat(2, 24px)" $row={23}><Cell name="groupGray" size={20} /><Cell name="group" size={20} /><Cell name="partsGray" size={20} /><Cell name="assembly" size={19} /></Cells>
          </GroupBody>
          <GroupLabel>Vytvořit</GroupLabel>
        </Group>
        <Group $w={41} $ctx>
          <GroupBody><BigButton $w={38}><Icon name="editPlace" size={21} />{"Upravit\nna místě"}</BigButton></GroupBody>
          <GroupLabel>Model</GroupLabel>
        </Group>
        <Group $w={71} $ctx>
          <GroupBody>
            <BigButton $off $w={38}><Icon name="host" size={21} />{"Související\nhostitelé"}</BigButton>
            <BigButton $w={32}><Icon name="floors" size={21} />{"Podlaží\nobjemu"}</BigButton>
          </GroupBody>
          <GroupLabel>Model</GroupLabel>
        </Group>
        <Group $w={71} $ctx>
          <GroupBody><BigButton $w={70}><Icon name="warning" size={21} />{"Zobrazit související\nupozornění"}</BigButton></GroupBody>
          <GroupLabel>Upozornění</GroupLabel>
        </Group>
      </Ribbon>
      <OptionsBar>Upravit | Objem</OptionsBar>

      <Main>
        <Palette>
          <PaletteTitle>Vlastnosti<button aria-label="Zavřít panel"><Icon name="close" size={7} /></button></PaletteTitle>
          <TypePreview>
            <Thumb>
              <Svg $s={30} viewBox="0 0 30 30">
                <path d="M4 2h12c6 0 9 3 9 8 0 4-2 6-5 7l6 11h-7l-5-10h-3v9H4z" fill="#8d8d8d" />
                <path d="M4 2h12c6 0 9 3 9 8l-3-1c0-2-2-4-5-4H9v22l-5 1z" fill="#b0b0b0" />
                <path d="M11 7v6h4c2 0 3-1 3-3s-1-3-3-3z" fill="#ededed" />
              </Svg>
            </Thumb>
            <Caret $soft />
          </TypePreview>
          <SelectorRow>
            <SelectWrap $w={162} $h={14}>
              <select aria-label="Typ prvku" defaultValue="o"><option value="o">Objem (1)</option></select>
              <Icon name="down" size={8} />
            </SelectWrap>
            <EditType><Icon name="typeProps" size={11} />Upravit typ</EditType>
          </SelectorRow>
          <Table>
            <colgroup><Col $w={110} /><Col /><Col $w={9} /></colgroup>
            <tbody>
              <SectionHead title="Vazby" />
              <tr>
                <Name scope="row"><label htmlFor="nearby">Přesunout s blízkými prvky</label></Name>
                <Value><Check id="nearby" type="checkbox" /></Value>
                <td />
              </tr>
            </tbody>
          </Table>
          <Highlight><Properties /></Highlight>
          <PaletteRest><Leader>1</Leader></PaletteRest>
          <PaletteFoot><a href="#help">Nápověda k vlastnostem</a><button disabled>Použít</button></PaletteFoot>
        </Palette>

        <View>
          <ViewTabs>
            <ViewTab><Icon name="home3d" size={10} />{"{3D}"}<Icon name="close" size={7} /></ViewTab>
            <Q name="menuTri" w={10} size={7} label="Seznam pohledů" />
          </ViewTabs>
          <ViewBody>
            <Canvas>
              <Building />
              <NavBar>
                <Icon name="dot" size={5} />
                <button aria-label="Navigační kolo"><Icon name="wheel" size={15} /></button>
                <Caret $soft />
                <hr />
                <button aria-label="Zvětšit oblast"><Icon name="zoomRegion" size={12} /></button>
                <Caret $soft />
                <Icon name="dot" size={5} />
              </NavBar>
            </Canvas>
            <VScroll><Icon name="up" size={6} /><i /><Icon name="downBold" size={6} /></VScroll>
          </ViewBody>
          <ViewBar>
            <Scale>1 : 96</Scale>
            <ViewTools>{viewIcons.map((n, i) => <Cell key={n} name={n} size={i === 14 || i === 9 ? 8 : 11} />)}</ViewTools>
            <HScroll><i /><Icon name="right" size={6} /></HScroll>
          </ViewBar>
        </View>
      </Main>

      <StatusBar>
        <Hint>Klikněte pro výběr, stiskněte klávesu TAB pro alternativy, CTRL pro přidání, SHIFT pro odebrání prvků.</Hint>
        <StatusGroup $gap={5}>
          <Icon name="workset" size={12} />
          <SelectWrap $w={133} $h={13} $white><select aria-label="Pracovní sada"><option> </option></select><Icon name="down" size={8} /></SelectWrap>
          <Icon name="editOnly" size={10} />
          :0
          <Spacer $w={4} />
          <Icon name="options" size={11} />
          <Icon name="pick" size={11} />
          <SelectWrap $w={133} $h={13} $white><select aria-label="Varianta návrhu" defaultValue="h"><option value="h">Hlavní model</option></select><Icon name="down" size={8} /></SelectWrap>
        </StatusGroup>
        <StatusGroup $gap={6} $push>
          {["selLink", "selUnder", "selPin", "selFace", "dragSel", "gear"].map((n) => <Cell key={n} name={n} size={11} />)}
          <StatusGroup $gap={1}><Icon name="filter" size={11} />:1</StatusGroup>
        </StatusGroup>
      </StatusBar>

      <CalloutLines viewBox="0 0 507 592" preserveAspectRatio="none" aria-hidden="true">
        <path d="M0 101L506 1M0 442L506 591" fill="none" stroke={teal} strokeWidth="2" vectorEffect="non-scaling-stroke" />
      </CalloutLines>
      <Callout><Properties big /></Callout>
    </Shell>
  );
}
